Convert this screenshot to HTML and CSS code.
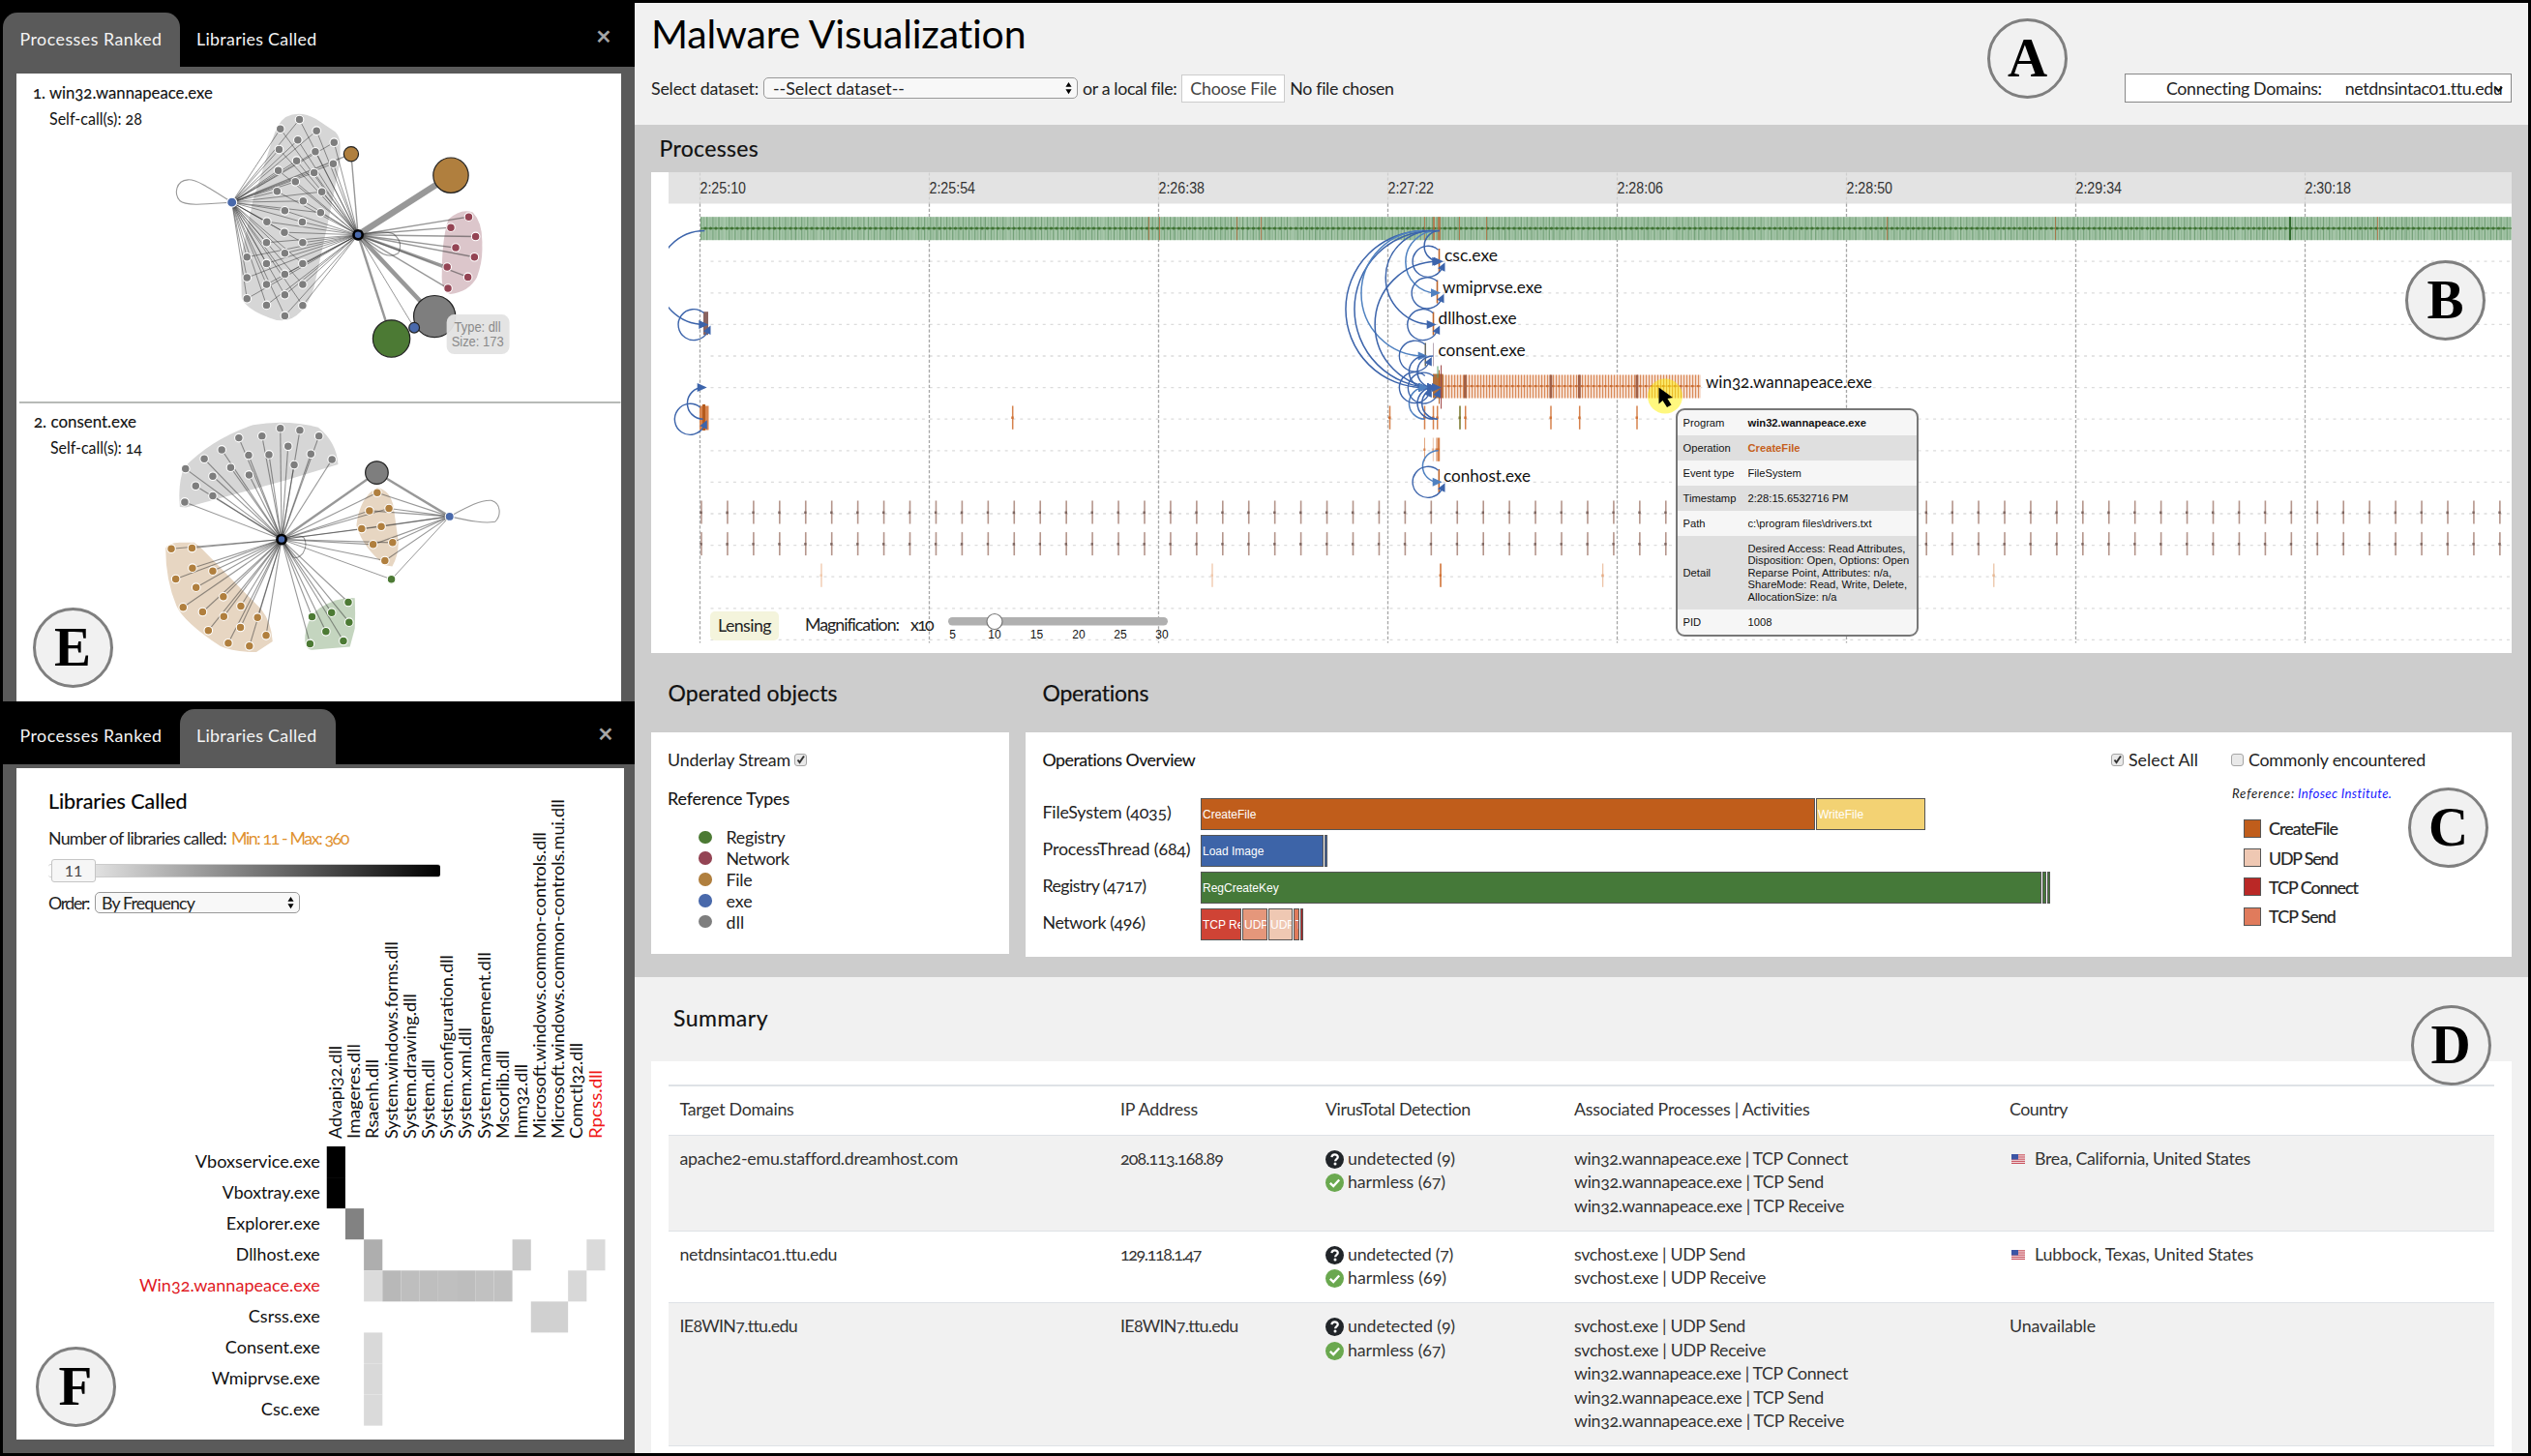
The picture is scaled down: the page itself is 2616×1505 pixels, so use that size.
FILE: index.html
```html
<!DOCTYPE html>
<html lang="en">
<head>
<meta charset="utf-8">
<title>Malware Visualization</title>
<link rel="stylesheet" href="styles.css">
</head>
<body>
<div class="app">
  <aside class="side">
    <section class="pane pane-top">
      <nav class="tabs">
        <a class="tab tab-a active"><span data-w="147">Processes Ranked</span></a>
        <a class="tab"><span data-w="124.5">Libraries Called</span></a>
        <span class="close">✕</span>
      </nav>
      <div class="sheet sheet-ranked">
        <svg id="ranked" class="fill" viewBox="17 76 625 648.5"></svg>
      </div>
    </section>
    <section class="pane pane-bottom">
      <nav class="tabs">
        <a class="tab tab-a"><span data-w="147">Processes Ranked</span></a>
        <a class="tab active"><span data-w="124.5">Libraries Called</span></a>
        <span class="close">✕</span>
      </nav>
      <div class="sheet sheet-libs">
        <div class="lib-controls">
          <h3><span data-w="143.5">Libraries Called</span></h3>
          <p class="lib-count"><span data-w="184">Number of libraries called:</span><span class="range" data-w="121">Min: 11 - Max: 360</span></p>
          <div class="ramp"><b>11</b></div>
          <div class="order"><span data-w="42">Order:</span><div class="select order-select"><span data-w="96">By Frequency</span><svg class="arrows" viewBox="0 0 8 14"><path d="M4 0 7.500 5.600H.5zM4 14 .5 8.400H7.500z"/></svg></div></div>
        </div>
        <svg id="matrix" class="fill" viewBox="17 794 628 694"></svg>
      </div>
    </section>
  </aside>

  <main class="main">
    <header class="head">
      <h1><span data-w="388">Malware Visualization</span></h1>
      <div class="form">
        <span class="l1" data-w="111">Select dataset:</span>
        <div class="select data-select"><span data-w="136">--Select dataset--</span><svg class="arrows" viewBox="0 0 8 14"><path d="M4 0 7.500 5.600H.5zM4 14 .5 8.400H7.500z"/></svg></div>
        <span class="l2" data-w="97">or a local file:</span>
        <span class="file-btn"><span data-w="89">Choose File</span></span>
        <span data-w="107">No file chosen</span>
        <div class="domains"><span class="d1" data-w="161">Connecting Domains:</span><span data-w="162">netdnsintac01.ttu.edu</span><svg class="chev" viewBox="0 0 9 8"><path d="M1 2 4.500 6 8 2" fill="none" stroke="#111" stroke-width="2"/></svg></div>
      </div>
    </header>

    <section class="work">
      <h2 class="h-proc"><span data-w="102.5">Processes</span></h2>
      <div class="timeline">
        <svg id="timeline" class="fill" viewBox="673 177.5 1923 497"></svg>
        <div class="lens">
          <span class="lens-btn"><span data-w="55">Lensing</span></span>
          <span class="mag" data-w="97">Magnification:</span>
          <span class="x10" data-w="23">x10</span>
          <svg class="slider" viewBox="0 0 240 36"><rect x="7" y="8" width="227" height="8.500" rx="4.200" fill="#b0b0b0"/><circle cx="55" cy="12.500" r="8" fill="#fff" stroke="#777" stroke-width="1.200"/><g class="ticks"><text x="11.500" y="30">5</text><text x="55" y="30">10</text><text x="98.500" y="30">15</text><text x="142" y="30">20</text><text x="185" y="30">25</text><text x="228" y="30">30</text></g></svg>
        </div>
        <div class="tip">
          <div><span>Program</span><b>win32.wannapeace.exe</b></div>
          <div><span>Operation</span><b class="op">CreateFile</b></div>
          <div><span>Event type</span><i>FileSystem</i></div>
          <div><span>Timestamp</span><i>2:28:15.6532716 PM</i></div>
          <div><span>Path</span><i>c:\program files\drivers.txt</i></div>
          <div class="tall"><span>Detail</span><i>Desired Access: Read Attributes,<br>Disposition: Open, Options: Open<br>Reparse Point, Attributes: n/a,<br>ShareMode: Read, Write, Delete,<br>AllocationSize: n/a</i></div>
          <div><span>PID</span><i>1008</i></div>
        </div>
      </div>

      <div class="cols">
        <div>
          <h2><span data-w="175">Operated objects</span></h2>
          <div class="card card-obj">
            <div class="line"><span data-w="127">Underlay Stream</span><svg class="check" viewBox="0 0 13 13"><use href="#box"/><path d="M3.500 6.500 5.500 9 10 2.500" fill="none" stroke="#333" stroke-width="2"/></svg></div>
            <div class="line med"><span data-w="126">Reference Types</span></div>
            <ul class="types">
              <li><i class="dot reg"></i><span data-w="61">Registry</span></li>
              <li><i class="dot net"></i><span data-w="65">Network</span></li>
              <li><i class="dot fil"></i><span data-w="27">File</span></li>
              <li><i class="dot exe"></i><span data-w="27">exe</span></li>
              <li><i class="dot dll"></i><span data-w="19">dll</span></li>
            </ul>
          </div>
        </div>
        <div>
          <h2><span data-w="110">Operations</span></h2>
          <div class="card card-ops">
            <div class="ops">
              <div class="line med"><span data-w="158">Operations Overview</span></div>
              <div class="bars">
                <div class="bar"><label><span data-w="133">FileSystem (4035)</span></label><i class="c-create" style="width:635px">CreateFile</i><i class="c-write" style="width:113px">WriteFile</i></div>
                <div class="bar"><label><span data-w="153">ProcessThread (684)</span></label><i class="c-load" style="width:127px">Load Image</i><i class="c-load" style="width:3px"></i></div>
                <div class="bar"><label><span data-w="107">Registry (4717)</span></label><i class="c-reg" style="width:869px">RegCreateKey</i><i class="c-reg" style="width:4px"></i><i class="c-reg" style="width:2px"></i></div>
                <div class="bar"><label><span data-w="106">Network (496)</span></label><i class="c-rec" style="width:42px">TCP Re</i><i class="c-udpr" style="width:26px">UDP</i><i class="c-udps" style="width:25px">UDP</i><i class="c-tcps" style="width:6px">T</i><i class="c-conn" style="width:3px"></i></div>
              </div>
            </div>
            <div class="picks">
              <div class="line">
                <svg class="check" viewBox="0 0 13 13"><use href="#box"/><path d="M3.500 6.500 5.500 9 10 2.500" fill="none" stroke="#333" stroke-width="2"/></svg><span class="sel" data-w="72">Select All</span>
                <svg class="check check-b" viewBox="0 0 13 13"><use href="#box"/></svg><span class="com" data-w="183">Commonly encountered</span>
              </div>
              <p class="ref"><span data-w="65">Reference:</span> <a><span data-w="97">Infosec Institute.</span></a></p>
              <ul class="keys">
                <li><i class="c-create"></i><span data-w="71">CreateFile</span></li>
                <li><i class="c-udps"></i><span data-w="71">UDP Send</span></li>
                <li><i class="c-conn"></i><span data-w="92">TCP Connect</span></li>
                <li><i class="c-tcps"></i><span data-w="69">TCP Send</span></li>
              </ul>
            </div>
          </div>
        </div>
      </div>
    </section>

    <section class="summary">
      <h2><span data-w="98">Summary</span></h2>
      <div class="table">
        <div class="row th"><div><span data-w="118">Target Domains</span></div><div><span data-w="80">IP Address</span></div><div><span data-w="150">VirusTotal Detection</span></div><div><span data-w="244">Associated Processes | Activities</span></div><div><span data-w="60">Country</span></div></div>
        <div class="row odd">
          <div><span data-w="287">apache2-emu.stafford.dreamhost.com</span></div><div><span data-w="106">208.113.168.89</span></div>
          <div><p><svg class="ic"><use href="#q"/></svg><span data-w="111">undetected (9)</span></p><p><svg class="ic"><use href="#ok"/></svg><span data-w="101">harmless (67)</span></p></div>
          <div><p><span data-w="283">win32.wannapeace.exe | TCP Connect</span></p><p><span data-w="258">win32.wannapeace.exe | TCP Send</span></p><p><span data-w="279">win32.wannapeace.exe | TCP Receive</span></p></div>
          <div><svg class="flag"><use href="#us"/></svg><span data-w="223">Brea, California, United States</span></div>
        </div>
        <div class="row">
          <div><span data-w="162">netdnsintac01.ttu.edu</span></div><div><span data-w="83">129.118.1.47</span></div>
          <div><p><svg class="ic"><use href="#q"/></svg><span data-w="109">undetected (7)</span></p><p><svg class="ic"><use href="#ok"/></svg><span data-w="102">harmless (69)</span></p></div>
          <div><p><span data-w="177">svchost.exe | UDP Send</span></p><p><span data-w="198">svchost.exe | UDP Receive</span></p></div>
          <div><svg class="flag"><use href="#us"/></svg><span data-w="226">Lubbock, Texas, United States</span></div>
        </div>
        <div class="row odd">
          <div><span data-w="121">IE8WIN7.ttu.edu</span></div><div><span data-w="121">IE8WIN7.ttu.edu</span></div>
          <div><p><svg class="ic"><use href="#q"/></svg><span data-w="111">undetected (9)</span></p><p><svg class="ic"><use href="#ok"/></svg><span data-w="101">harmless (67)</span></p></div>
          <div><p><span data-w="177">svchost.exe | UDP Send</span></p><p><span data-w="198">svchost.exe | UDP Receive</span></p><p><span data-w="283">win32.wannapeace.exe | TCP Connect</span></p><p><span data-w="258">win32.wannapeace.exe | TCP Send</span></p><p><span data-w="279">win32.wannapeace.exe | TCP Receive</span></p></div>
          <div><span data-w="89">Unavailable</span></div>
        </div>
        <div class="row last"></div>
      </div>
    </section>
  </main>

  <b class="badge" style="left:2095.500px;top:60.500px">A</b>
  <b class="badge" style="left:2527.500px;top:310.500px">B</b>
  <b class="badge" style="left:2530.500px;top:855px">C</b>
  <b class="badge" style="left:2533px;top:1080px">D</b>
  <b class="badge" style="left:75px;top:669px">E</b>
  <b class="badge" style="left:78px;top:1433px">F</b>
</div>

<svg class="defs">
  <symbol id="box" viewBox="0 0 13 13"><rect x=".5" y=".5" width="12" height="12" rx="2.500" fill="#e9e9e9" stroke="#a5a5a5"/></symbol>
  <symbol id="q" viewBox="0 0 19 19"><circle cx="9.500" cy="9.500" r="9.500" fill="#212529"/><path d="M6.400 7.200C6.600 5 8 4.300 9.600 4.300c1.800 0 3.200 1 3.200 2.800 0 2-2.700 2.200-2.700 4.100" fill="none" stroke="#fff" stroke-width="2.200"/><circle cx="10" cy="14" r="1.500" fill="#fff"/></symbol>
  <symbol id="ok" viewBox="0 0 19 19"><circle cx="9.500" cy="9.500" r="9.500" fill="#6aa84f"/><path d="M4.800 9.800 8.200 13 14.200 6.500" fill="none" stroke="#fff" stroke-width="2.400"/></symbol>
  <symbol id="us" viewBox="0 0 14 10"><rect width="14" height="10" fill="#f0d5d8"/><path d="M0 .8h14M0 3h14M0 5.200h14M0 7.400h14M0 9.500h14" stroke="#c8505c"/><rect width="7" height="5.500" fill="#3c55a5"/></symbol>
</svg>
<script src="charts.js"></script>
</body>
</html>
```
FILE: styles.css
```css
* { box-sizing: border-box; }
body { margin: 0; font: 17.8px/24px Lato, "Open Sans", sans-serif; font-variant-numeric: oldstyle-nums; color: #222; overflow: hidden; }
h1, h2, h3, p, ul { margin: 0; padding: 0; font-weight: 400; }
ul { list-style: none; }
[data-w] { display: inline-block; white-space: nowrap; }
.defs { position: absolute; width: 0; height: 0; }
.fill { display: block; width: 100%; height: 100%; }

.app { position: relative; width: 2616px; height: 1505px; border: 3px solid #000; display: grid; grid-template-columns: 652.5px 1fr; overflow: hidden; }

/* left column */
.side { background: #5a5a5a; display: flex; flex-direction: column; }
.pane-top { height: 721.5px; }
.tabs { display: flex; align-items: flex-end; height: 65.5px; background: #000; color: #f4f4f4; }
.tab { height: 55.5px; line-height: 54px; padding-left: 17.5px; width: 161px; border-radius: 15px 15px 0 0; }
.tab-a { width: 182.5px; }
.tab.active { background: #5a5a5a; }
.close { margin-left: auto; margin-right: 24px; height: 55.5px; line-height: 50px; width: 16px; font-family: "DejaVu Sans", sans-serif; font-size: 20px; color: #a8a8a8; -webkit-text-stroke: .6px #a8a8a8; }
.sheet { background: #fff; }
.sheet-ranked { margin: 7.500px 14px 0; height: 648.500px; }
.pane-bottom { padding-top: 0; }
.pane-bottom .tabs { height: 65px; }
.pane-bottom .tab { height: 56.500px; }
.pane-bottom .close { margin-right: 22px; }
.sheet-libs { margin: 4.500px 11px 0 14px; height: 694px; display: grid; }
.sheet-libs > * { grid-area: 1 / 1; }
.lib-controls { padding: 19px 0 0 33px; }
.lib-controls h3 { font-size: 21.500px; line-height: 30px; color: #000; -webkit-text-stroke: .2px #000; }
.lib-count { margin-top: 10.500px; line-height: 24px; }
.range { margin-left: 5px; color: #e0912f; }
.ramp { width: 405px; height: 14px; margin-top: 15.500px; background: linear-gradient(90deg, #fff, #000); border-radius: 3px; border: 1px solid #ccc; border-width: 1px 0; display: flex; align-items: center; }
.ramp b { margin-left: 3px; width: 46px; height: 24px; background: #f6f6f6; border: 1px solid #c5c5c5; border-radius: 3px; font: 16px/21px Lato, sans-serif; color: #454545; text-align: center; }
.order { display: flex; align-items: center; margin-top: 13.500px; }
.select { display: flex; align-items: center; justify-content: space-between; border: 1.500px solid #999; border-radius: 5px; background: #f8f8f8; height: 22px; }
.order-select { width: 212px; margin-left: 6px; padding: 0 5px 0 6px; }
.arrows { width: 7px; height: 14px; }

/* header */
.main { display: flex; flex-direction: column; background: #f1f1f1; min-width: 0; }
.head { height: 125.500px; padding: 0 17px 0 17.500px; }
h1 { font-size: 41px; line-height: 64px; height: 64px; color: #000; }
.form { display: flex; align-items: center; height: 30px; margin-top: 9px; }
.data-select { width: 325px; margin: 0 5px; padding: 0 5px 0 9px; }
.file-btn { width: 107px; height: 29px; line-height: 26px; margin: 0 5px; padding-left: 8px; background: #fff; border: 1.500px solid #ccc; color: #444; }
.domains { position: relative; margin-left: auto; width: 400px; height: 30px; padding-left: 42px; display: flex; align-items: center; background: #fff; border: 1.500px solid #888; }
.d1 { margin-right: 24px; }
.chev { position: absolute; right: 8px; top: 11px; width: 9px; height: 8px; }

/* processes */
.work { height: 881.500px; padding: 0 17px 0 17.500px; background: #cdcdcd; }
h2 { font-size: 23px; color: #111; -webkit-text-stroke: .2px #111; }
.h-proc { line-height: 49px; padding-left: 8.500px; }
.timeline { position: relative; height: 497px; background: #fff; }
.lens { position: absolute; left: 61px; top: 454px; display: flex; align-items: center; height: 30px; }
.lens-btn { width: 71px; height: 30px; line-height: 28px; padding-left: 8px; background: #f4f4dc; border-radius: 5px; }
.mag, .x10 { position: relative; top: -1.500px; }
.mag { margin-left: 27px; }
.x10 { margin-left: 12px; }
.slider { width: 240px; height: 36px; margin: 2px 0 0 9px; }
.ticks { font: 12px "Liberation Sans", sans-serif; text-anchor: middle; fill: #222; }
.tip { position: absolute; left: 1058.500px; top: 244px; width: 251px; border: 2px solid #777; border-radius: 9px; overflow: hidden; font: 11.200px/12.600px "Liberation Sans", sans-serif; font-variant-numeric: normal; background: #f6f6f6; color: #111; }
.tip div { display: grid; grid-template-columns: 67px 1fr; align-items: center; height: 26px; padding: 1px 0 0 6px; }
.tip div:nth-child(even) { background: #dfdfdf; }
.tip .tall { height: 76px; }
.tip i { font-style: normal; white-space: nowrap; }
.tip .op { color: #c55f1c; }

/* operations */
.cols { display: grid; grid-template-columns: 370px 1fr; gap: 17px; }
.cols h2 { line-height: 82px; height: 82.500px; padding-left: 17.500px; }
.card { background: #fff; padding: 14px 17px 0; }
.card-obj { height: 229px; }
.card-ops { height: 231.500px; display: flex; padding-left: 17.500px; }
.line { display: flex; align-items: center; height: 28px; }
.med { margin-top: 12px; color: #111; -webkit-text-stroke: .12px #111; }
.ops .med { margin-top: 0; }
.check { width: 13px; height: 13px; margin-left: 4px; }
.types { margin: 15.500px 0 0 32px; }
.types li { display: flex; align-items: center; gap: 15px; height: 21.800px; }
.dot { width: 13.500px; height: 13.500px; border-radius: 50%; }
.reg { background: #4c7a34; } .net { background: #944454; } .fil { background: #b07f3e; } .exe { background: #4969ab; } .dll { background: #7e7e7e; }
.ops { width: 1100.500px; }
.bars { display: grid; gap: 5px; margin-top: 26px; }
.bar { display: flex; gap: 1px; height: 33px; }
.bar label { width: 162.500px; line-height: 29px; }
.bar i { overflow: hidden; white-space: nowrap; border: 1px solid #555; font: 12px/32px "Liberation Sans", sans-serif; color: #fff; padding-left: 1px; }
.c-create { background: #c05d1b; } .c-write { background: #f3d273; } .c-load { background: #3d64a8; } .c-reg { background: #457939; }
.c-rec { background: #cf4335; } .c-udpr { background: #e5977b; } .c-udps { background: #efc8b3; } .c-tcps { background: #e07b5c; } .c-conn { background: #ba2826; }
.sel { margin-left: 5px; }
.com { margin-left: 5px; }
.check-b { margin-left: 34px; }
.ref { margin: 9px 0 0 129px; font-size: 13.200px; font-style: italic; }
.ref a { color: #1a1aff; }
.keys { margin: 9px 0 0 141px; }
.keys li { display: flex; align-items: center; gap: 8px; height: 30.400px; color: #222; -webkit-text-stroke: .2px #222; }
.keys i { width: 18px; height: 19px; border: 1px solid #555; }

/* summary */
.summary { flex: 1; padding: 0 17px 0 17.500px; }
.summary h2 { line-height: 85px; height: 87px; padding-left: 23px; }
.table { height: 410px; background: #fff; padding: 24px 18px 0; }
.row { display: grid; grid-template-columns: 455.500px 212px 257px 450px 1fr; padding: 11px 0 13.500px 11.500px; border-top: 1px solid #dee2e6; line-height: 24.500px; color: #333; }
.row.th { height: 51.500px; padding-top: 11px; border-top-width: 2px; }
.row.odd { background: #f1f1f1; }
.row.last { padding: 0; }
.row p { height: 24.500px; display: flex; align-items: center; }
.ic { width: 19px; height: 19px; margin-right: 4px; margin-top: 3px; }
.flag { width: 14px; height: 10px; margin: 0 10px 1px 2px; }

.badge { position: absolute; width: 83px; height: 83px; margin: -44.500px 0 0 -44.500px; border: 3px solid #7f7f7f; border-radius: 50%; background: #f1f1f1; color: #000; font: bold 57px/76px "Liberation Serif", serif; text-align: center; }
svg text { fill: #111; }
svg .ax { font: 16.500px "Liberation Sans", sans-serif; font-variant-numeric: normal; fill: #333; }
svg .note { font: 14px "Liberation Sans", sans-serif; font-variant-numeric: normal; fill: #8a8a8a; }
```
FILE: charts.js
```js
document.querySelectorAll('[data-w]').forEach(el => {
  const w = +el.dataset.w, nat = el.getBoundingClientRect().width;
  el.style.letterSpacing = ((w - nat) / el.textContent.length) + 'px';
});

const NS = 'http://www.w3.org/2000/svg';
function add(parent, tag, attrs, text) {
  const e = document.createElementNS(NS, tag);
  for (const k in attrs) e.setAttribute(k, attrs[k]);
  if (text) e.textContent = text;
  parent.appendChild(e);
  return e;
}
function label(p, x, y, s, w, extra) {
  return add(p, 'text', Object.assign({ x, y, 'font-size': 18, textLength: w, lengthAdjust: 'spacingAndGlyphs' }, extra), s);
}
const GREY = '#7e7e7e', BROWN = '#b07f3e', GREEN = '#4c7a34', RED = '#944454', BLUE = '#4969ab';

// ---- ranked process graphs ----
const ranked = document.getElementById('ranked');
const KX = 660 / 1568, OX = .8;
function graph(oy) {
  const X = v => OX + v * KX, Y = v => oy + v / 3;
  return {
    hull: (d, fill) => add(ranked, 'path', { d, fill, transform: `translate(${OX} ${oy}) scale(${KX} .33333)` }),
    curve: d => add(ranked, 'path', { d, fill: 'none', stroke: '#999', 'stroke-width': 1.1, 'vector-effect': 'non-scaling-stroke', transform: `translate(${OX} ${oy}) scale(${KX} .33333)` }),
    edge: (a, b, w = 1, o = .5) => add(ranked, 'line', { x1: X(a[0]), y1: Y(a[1]), x2: X(b[0]), y2: Y(b[1]), stroke: '#333', 'stroke-width': w, opacity: o }),
    node: (p, fill, r = 4.3, stroke = '#fff', sw = 1.1) => add(ranked, 'circle', { cx: X(p[0]), cy: Y(p[1]), r, fill, stroke, 'stroke-width': sw })
  };
}
let g = graph(0);
const dlls = [[734,370],[687,399],[776,405],[730,434],[819,441],[684,463],[773,470],[727,498],[817,507],[682,528],[770,535],[724,563],[679,593],[789,594],[743,623],[698,653],[786,659],[654,687],[741,688],[697,720],[653,752],[742,752],[698,785],[605,797],[653,817],[742,817],[698,850],[605,861],[653,882],[742,882],[698,914],[605,926],[653,946],[742,947],[698,979]];
const nets = [[1150,672],[1106,705],[1167,733],[1118,768],[1164,797],[1097,828],[1148,859],[1099,894]];
const A = [568,627], B = [878,728];
g.hull('M700 362Q735 340 775 368L822 408Q836 425 834 460V500L804 690 770 890Q760 935 738 965 705 1010 660 985 605 960 592 925L590 800 620 620 668 430Q680 380 700 362Z', '#d6d6d6');
g.hull('M1100 680Q1130 645 1160 658 1185 690 1183 760 1185 810 1170 860 1150 905 1105 912 1082 905 1084 850 1084 740 1100 680Z', '#dcc6cb');
g.curve('M568 627C510 580 480 555 460 557 430 560 425 600 440 622 455 640 510 632 568 627');
g.curve('M878 728Q940 712 965 725 990 750 977 785 950 805 920 770Z');
dlls.forEach(d => { g.edge(A, d); g.edge(B, d); });
nets.forEach((d, i) => g.edge(B, d, i === 5 ? 2.4 : 1.4));
g.edge(A, [861,477], 1.4); g.edge(B, [861,477], 1.4);
g.edge(B, [1106,543], 6.5); g.edge(B, [1066,981], 4.5); g.edge(B, [960,1050], 2.4); g.edge(B, [1016,1016], 1);
dlls.forEach(d => g.node(d, GREY)); nets.forEach(d => g.node(d, RED));
g.node(A, BLUE, 5); g.node(B, BLUE, 4.6, '#000', 2.6);
g.node([861,477], BROWN, 7.6, '#222', 1.2); g.node([1106,543], BROWN, 18.2, '#222', 1.2);
g.node([1066,981], GREY, 21.6, '#222', 1.2); g.node([960,1050], GREEN, 19.2, '#222', 1.2); g.node([1016,1016], BLUE, 5.4, '#222', 1.2);
label(ranked, 34, 101.7, '1. win32.wannapeace.exe', 186, { stroke: '#111', 'stroke-width': .15 });
label(ranked, 51, 129, 'Self-call(s): 28', 96);
add(ranked, 'rect', { x: 462, y: 325, width: 65, height: 41, rx: 8, fill: '#e3e3e3', opacity: .95 });
add(ranked, 'text', { x: 494, y: 343, class: 'note', 'text-anchor': 'middle', textLength: 48, lengthAdjust: 'spacingAndGlyphs' }, 'Type: dll');
add(ranked, 'text', { x: 494, y: 358, class: 'note', 'text-anchor': 'middle', textLength: 54, lengthAdjust: 'spacingAndGlyphs' }, 'Size: 173');
add(ranked, 'rect', { x: 20, y: 415, width: 622, height: 2, fill: '#b7bab7' });

g = graph(400);
const grey2 = [[687,128],[735,134],[782,152],[642,152],[585,158],[706,184],[543,195],[609,212],[659,210],[762,208],[500,223],[814,225],[721,242],[565,250],[454,254],[610,273],[521,277],[479,307],[521,338],[452,357]];
const mid2 = [[925,328],[906,384],[954,377],[887,440],[935,433],[915,489],[963,483],[944,539]];
const file2 = [[419,502],[470,500],[471,562],[521,571],[430,596],[480,622],[547,651],[590,680],[448,684],[496,698],[548,712],[631,715],[589,746],[510,756],[652,771],[559,795],[611,804]];
const reg2 = [[854,668],[813,700],[765,713],[856,730],[799,759],[842,788],[760,797]];
const C = [690,473], D = [1103,402];
g.hull('M440 372Q435 300 450 250 520 160 620 118 700 100 780 125 825 170 829 240L700 290 455 374Z', '#d6d6d6');
g.hull('M925 312Q960 320 966 380L977 480Q978 520 962 557L945 553Q890 500 874 430 880 360 910 325Z', '#e7d6c2');
g.hull('M405 500Q410 485 440 483H475Q490 495 500 510L640 690Q665 730 668 790L628 823Q570 822 540 805 450 730 432 680 405 600 405 500Z', '#e7d6c2');
g.hull('M748 770Q755 710 785 685 830 650 870 655 872 700 870 750L858 806 765 816Q745 815 748 770Z', '#c4d5bf');
g.curve('M1103 402C1150 370 1180 350 1205 352 1230 360 1230 400 1215 418 1190 425 1150 415 1103 402');
g.curve('M690 473Q735 455 745 468 755 490 743 515 730 535 718 528Z');
[...grey2, ...mid2, ...file2, ...reg2].forEach(d => g.edge(C, d, 1.1));
mid2.forEach(d => g.edge(D, d, 1.1));
g.edge(C, [960,597]); g.edge(D, [960,597]); g.edge(C, [924,266], 2.4); g.edge(D, [924,266], 2.4);
grey2.forEach(d => g.node(d, GREY)); mid2.forEach(d => g.node(d, BROWN)); file2.forEach(d => g.node(d, BROWN)); reg2.forEach(d => g.node(d, GREEN));
g.node([960,597], GREEN); g.node([924,266], GREY, 11.8, '#222', 1.2); g.node(D, BLUE, 4.5); g.node(C, BLUE, 4.6, '#000', 2.6);
label(ranked, 35, 441.7, '2. consent.exe', 106, { stroke: '#111', 'stroke-width': .15 });
label(ranked, 52, 468.7, 'Self-call(s): 14', 95);

// ---- library matrix ----
const mx = document.getElementById('matrix');
const CW = 19.2, RH = 32.1, X0 = 338, Y0 = 1185;
[['Vboxservice.exe',129],['Vboxtray.exe',101],['Explorer.exe',97],['Dllhost.exe',87],['Win32.wannapeace.exe',187],['Csrss.exe',74],['Consent.exe',98],['Wmiprvse.exe',112],['Csc.exe',61]]
  .forEach(([s, w], i) => { const t = label(mx, 331 - w, Y0 + i * RH + 21.7, s, w); if (i === 4) t.style.fill = '#e0191f'; });
[['Advapi32.dll',96],['Imageres.dll',98],['Rsaenh.dll',82],['System.windows.forms.dll',204],['System.drawing.dll',150],['System.dll',82],['System.configuration.dll',190],['System.xml.dll',115],['System.management.dll',193],['Mscorlib.dll',91],['Imm32.dll',77],['Microsoft.windows.common-controls.dll',317],['Microsoft.windows.common-controls.mui.dll',351],['Comctl32.dll',99],['Rpcss.dll',71]]
  .forEach(([s, w], i) => { const t = label(mx, 0, 0, s, w, { transform: `translate(${X0 + i * CW + 15.3} 1177) rotate(-90)`, 'font-size': 17.5 }); if (i === 14) t.style.fill = '#f01818'; });
[[0,0,'#000'],[0,1,'#000'],[1,2,'#828282'],[2,3,'#aeaeae'],[10,3,'#cbcbcb'],[14,3,'#dadada'],[2,4,'#dbdbdb'],[3,4,'#b8b8b8'],[4,4,'#bebebe'],[5,4,'#bebebe'],[6,4,'#bfbfbf'],[7,4,'#bdbdbd'],[8,4,'#c1c1c1'],[9,4,'#c1c1c1'],[13,4,'#d8d8d8'],[11,5,'#d0d0d0'],[12,5,'#d1d1d1'],[2,6,'#d9d9d9'],[2,7,'#d9d9d9'],[2,8,'#dadada']]
  .forEach(([c, r, fill]) => add(mx, 'rect', { x: X0 + c * CW, y: Y0 + r * RH, width: CW, height: RH, fill }));

// ---- timeline ----
const tl = document.getElementById('timeline');
add(tl, 'rect', { x: 691, y: 177.5, width: 1905, height: 32.5, fill: '#e3e3e3' });
for (let i = 0; i < 13; i++) add(tl, 'line', { x1: 734.5, x2: 2596, y1: 269.7 + i * 32.6, y2: 269.7 + i * 32.6, stroke: '#dcdcdc', 'stroke-width': 1.3, 'stroke-dasharray': '3 4.8' });
['2:25:10','2:25:54','2:26:38','2:27:22','2:28:06','2:28:50','2:29:34','2:30:18'].forEach((s, i) => {
  const x = 723.5 + i * 237;
  add(tl, 'line', { x1: x, x2: x, y1: 178, y2: 210, stroke: '#cfcfcf', 'stroke-width': 1.2, 'stroke-dasharray': '3 2' });
  add(tl, 'line', { x1: x, x2: x, y1: 210, y2: 664, stroke: '#a6a6a6', 'stroke-width': 1.3, 'stroke-dasharray': '3.200 2' });
  add(tl, 'text', { x, y: 199.5, class: 'ax', textLength: 47.5, lengthAdjust: 'spacingAndGlyphs' }, s);
});
const bar = (x, y, w, h, fill, o = 1) => add(tl, 'rect', { x, y, width: w, height: h, fill, opacity: o });
bar(724, 223.7, 1872, 24, '#b2cfb5');
const shade = [.55, .12, .35, .18, .6, .2, .3, .1];
for (let i = 0; 724 + i * 1.53 < 2595; i++) bar(724 + i * 1.53, 223.7, 1.3, 24, '#3f7a45', shade[(i * 5 + (i >> 4)) % 8] * .9);
bar(724, 234.8, 1872, 1.4, '#457939', .8);
for (let x = 729; x < 2590; x += 5.5) add(tl, 'circle', { cx: x, cy: 235.5, r: 1.6, fill: '#3f7233' });
[[1187,1],[1198,1],[1278,1],[1303,1],[1472,1],[1481,2],[1486,3],[1508,1],[1536,1],[1950,1],[2124,1],[2457,1]].forEach(([x, w]) => bar(x, 223.7, w, 24, '#b5673a', .75));
bar(2366, 223.7, 2, 24, '#2f6a2c');
// periodic events of the two background services
for (let i = 0; i < 70; i++) [517, 549.6].forEach(y => {
  const x = 725 + i * 26.94;
  bar(x - .8, y, 1.6, 24, '#a88478', .85); bar(x - 1.6, y + 11, 2.4, 2.6, '#6d5550', .8);
});
const tick = (x, y, w = 1.5, fill = '#cf6c2e', o = .85) => { bar(x - w / 2, y, w, 24.300, fill, o); bar(x - 1.500, y + 11, 2.500, 2.500, fill, o); };
[1046.7,1436.5,1472.5,1481.5,1485.7,1514.7,1603,1632.7,1692].forEach(x => tick(x, 419));
tick(1509, 419, 1.8, '#77752a');
tick(1472.5, 452, 1, '#cf6c2e', .6); tick(1481.3, 452, 1, '#cf6c2e', .4); tick(1485, 452, 1); tick(1487, 452, 2.4);
tick(849, 582, 1.5, '#eec5a8'); tick(1253, 582, 1.5, '#eec5a8'); tick(1489, 582, 1.8); tick(1656.7, 582, 1, '#e5a77c'); tick(2060.8, 582, 1.2, '#e5b48e');
// process activity near the start of the capture
bar(727, 321.7, 5, 24, '#8a6460'); bar(723, 419, 9.5, 25, '#d8854f'); bar(726, 417.5, 3, 27, '#b55a1d');
// win32.wannapeace.exe
bar(1482, 387, 276, 24, '#f7e1d5');
for (let x = 1491; x < 1757; x += 3) bar(x, 387, 1.1, 24, '#cf6c2e', .75);
bar(1490, 398, 268, 1.2, '#cf6c2e', .7);
for (let x = 1496; x < 1757; x += 6) bar(x, 397.500, 2.500, 2.200, '#c4672c', .8);
bar(1481, 386, 10.5, 25, '#b0703c'); bar(1485.500, 378, 1, 12, '#5b9b6a'); bar(1489, 377, 1, 45, '#a04848'); bar(1487, 382, 1, 35, '#b55a1d');
[1514,1602.5,1632,1691.5].forEach(x => bar(x - 1, 387, 2.8, 24, '#a06047'));
[[1487,256.5],[1485,289],[1481,322]].forEach(([x, y]) => bar(x - .3, y, 1.6, 24, '#c0672c'));
bar(1472.5, 354, 1.5, 24, '#6a6a60'); bar(1481, 354, 1, 24, '#b9a9b4'); bar(1486.5, 484.5, 1.6, 24, '#c0672c');

const clip = add(tl, 'svg', { x: 691, y: 177.5, width: 1905, height: 497, viewBox: '691 177.5 1905 497' });
const DB = '#3c64ab', LB = '#4f81c0';
function arc(cx, y1, y2, c = DB, head) {
  const r = Math.abs(y2 - y1) / 2;
  add(clip, 'path', { d: `M${cx} ${y1}A${r} ${r} 0 0 0 ${cx} ${y2}`, fill: 'none', stroke: c, 'stroke-width': 1.5 });
  if (head) { const y = head === 'up' ? y1 : y2; add(clip, 'path', { d: `M${cx - 6} ${y - 4.500}L${cx + 4} ${y} ${cx - 6} ${y + 4.500}Z`, fill: c }); }
}
function loop(cx, cy) {
  add(clip, 'path', { d: `M${cx + 10.500} ${cy - 12}A16 16 0 1 0 ${cx + 14} ${cy + 8}`, fill: 'none', stroke: DB, 'stroke-width': 1.4 });
  add(clip, 'path', { d: `M${cx + 17.500} ${cy + 1}V${cy + 10.500}L${cx + 10} ${cy + 7}Z`, fill: DB });
}
const row = i => i === 0 ? 238 : 237.2 + i * 32.58;
arc(1472, row(0), row(5), DB, 1); arc(1481, row(0), row(5), DB, 1); arc(1471.7, row(0), row(4), LB, 1);
arc(1480.7, row(0), row(3), DB, 1); arc(1485, row(0), row(2), LB, 1); arc(1488, row(0), row(1), DB, 1); arc(1486.3, row(1), row(5), DB, 'up');
[1472.7, 1481.3].forEach(x => arc(x, row(4), row(5), DB, 1));
arc(1472.7, row(5), row(6), LB, 'up'); arc(1481.3, row(5), row(6), DB, 'up'); arc(1486, row(5), row(6), DB, 'up');
arc(1486.7, 465.3, row(8), LB, 1);
add(clip, 'path', { d: 'M1470 238H1488', fill: 'none', stroke: DB, 'stroke-width': 1.4 });
[[1476,269.7],[1475,302.3],[1470.7,335],[1462.3,367.5],[1462.3,400],[1471.300,400.500],[1476,497.700],[717,335],[713.3,432.7]].forEach(p => loop(...p));
arc(728.3, row(0), row(3), DB, 1); arc(726.7, row(5), row(6), DB, 'up');

[['csc.exe',1493,269.5,55],['wmiprvse.exe',1491,302,103],['dllhost.exe',1486.5,334.5,81],['consent.exe',1486.5,367.2,90],['win32.wannapeace.exe',1763,400,172],['conhost.exe',1492,497.5,90]]
  .forEach(([s, x, y, w]) => label(tl, x, y, s, w));
add(tl, 'circle', { cx: 1721, cy: 409, r: 18, fill: '#fff200', opacity: .5 });
add(tl, 'path', { d: 'M1714.500 400V417L1718.500 413.500 1723 420.500 1727.500 418 1723.500 411.500 1729 410.500Z', fill: '#000' });
```
